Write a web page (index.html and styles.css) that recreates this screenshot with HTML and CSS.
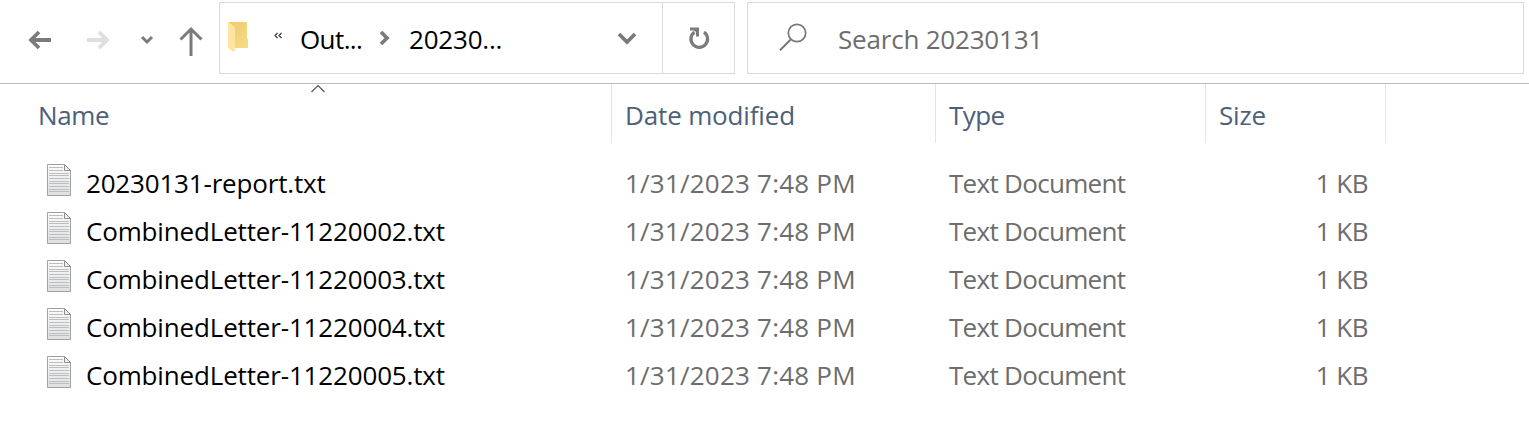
FILE: index.html
```html
<!DOCTYPE html>
<html lang="en">
<head>
<meta charset="utf-8">
<title>20230131</title>
<link rel="stylesheet" href="styles.css">
</head>
<body>
<svg class="defs" width="0" height="0" aria-hidden="true">
  <defs>
    <linearGradient id="paper" x1="0" y1="0" x2="0" y2="1"><stop offset="0" stop-color="#fcfcfc"/><stop offset="1" stop-color="#dde0e1"/></linearGradient>
    <linearGradient id="folder" x1="0" y1="0" x2="1" y2="1"><stop offset="0" stop-color="#ecca6c"/><stop offset="1" stop-color="#fadc86"/></linearGradient>
    <symbol id="doc" viewBox="0 0 26 34">
      <path d="M1.5 1.5H18.5L24.5 7.5V32.500H1.500Z" fill="url(#paper)" stroke="#9fa1a2"/>
      <path d="M3 4.500H17M3 7.500H17M3 10.500H23M3 12.500H23M3 15.500H23M3 18.500H23M3 20.500H23M3 23.500H23M3 26.500H23M3 28.500H23" stroke="#bcbebf"/>
      <path d="M18.500 1.500V7.500H24.500Z" fill="#eceeee" stroke="#8c8e8f"/>
    </symbol>
  </defs>
</svg>
<header class="toolbar">
  <nav class="nav">
    <svg width="220" height="83" fill="none" stroke="#7b7b7b">
      <path d="M51 40H31M39 32L31 40L39 48" stroke-width="3.800"/>
      <path d="M87 40H107M99 32L107 40L99 48" stroke="#dedede" stroke-width="3.800"/>
      <path d="M142 37L147 42L152 37" stroke-width="3"/>
      <path d="M191 56V29M180.500 39.500L191 29L201.500 39.500" stroke-width="3"/>
    </svg>
  </nav>
  <div class="address">
    <svg class="folder" width="24" height="34" viewBox="0 0 24 34">
      <path d="M1 1H20V17L21 18V27H6Z" fill="url(#folder)"/>
      <path d="M1 1L8 6V29L6.500 31L1 27Z" fill="#ffe59f"/>
    </svg>
    <svg class="more" width="10" height="8" fill="none" stroke="#333" stroke-width="1.200"><path d="M4.500 1L2 3.500L4.500 6M8.500 1L6 3.500L8.500 6"/></svg>
    <span class="crumb parent">Out...</span>
    <svg class="sep" width="12" height="16" fill="none" stroke="#7b7b7b" stroke-width="3.800"><path d="M2 2L8 8L2 14"/></svg>
    <span class="crumb current">20230...</span>
    <svg class="drop" width="20" height="14" fill="none" stroke="#7b7b7b" stroke-width="3.800"><path d="M2 3L10 11L18 3"/></svg>
    <div class="refresh">
      <svg width="22" height="24" viewBox="0 0 22 24"><path d="M6.500 6.200A8.300 8.300 0 1 0 16 6.200" fill="none" stroke="#7b7b7b" stroke-width="3.300"/><path d="M2 1.500H11V10.500H8V6L6 4.500H2Z" fill="#7b7b7b"/></svg>
    </div>
  </div>
  <div class="search">
    <svg width="30" height="32" fill="none" stroke="#777"><circle cx="19" cy="11" r="8.700" stroke-width="1.700"/><path d="M13 17.300L2 28.300" stroke-width="2"/></svg>
    <span class="hint">Search 20230131</span>
  </div>
</header>
<main class="files">
  <div class="head">
    <div class="col"><span class="h-name">Name</span><svg class="sort" width="16" height="9" fill="none" stroke="#555" stroke-width="1.200"><path d="M1.500 8L8 1.500L14.500 8"/></svg></div>
    <div class="col"><span class="h-date">Date modified</span></div>
    <div class="col"><span class="h-type">Type</span></div>
    <div class="col"><span class="h-size">Size</span></div>
  </div>
  <div class="row"><div class="name"><svg width="26" height="34"><use href="#doc"/></svg><span class="report">20230131-report.txt</span></div><span class="date">1/31/2023 7:48 PM</span><span class="type">Text Document</span><span class="size">1 KB</span></div>
  <div class="row"><div class="name"><svg width="26" height="34"><use href="#doc"/></svg><span class="letter">CombinedLetter-11220002.txt</span></div><span class="date">1/31/2023 7:48 PM</span><span class="type">Text Document</span><span class="size">1 KB</span></div>
  <div class="row"><div class="name"><svg width="26" height="34"><use href="#doc"/></svg><span class="letter">CombinedLetter-11220003.txt</span></div><span class="date">1/31/2023 7:48 PM</span><span class="type">Text Document</span><span class="size">1 KB</span></div>
  <div class="row"><div class="name"><svg width="26" height="34"><use href="#doc"/></svg><span class="letter">CombinedLetter-11220004.txt</span></div><span class="date">1/31/2023 7:48 PM</span><span class="type">Text Document</span><span class="size">1 KB</span></div>
  <div class="row"><div class="name"><svg width="26" height="34"><use href="#doc"/></svg><span class="letter">CombinedLetter-11220005.txt</span></div><span class="date">1/31/2023 7:48 PM</span><span class="type">Text Document</span><span class="size">1 KB</span></div>
</main>
</body>
</html>
```

FILE: styles.css
```css
* { box-sizing: border-box; }
body { margin: 0; height: 439px; overflow: hidden; background: #fff; color: #000; font: 26px/46px "Open Sans", "Noto Sans", sans-serif; white-space: nowrap; }
svg { display: block; flex: none; }
.defs { position: absolute; }
.toolbar { display: flex; height: 84px; border-bottom: 1px solid #bcbcbc; }
.nav { width: 219px; }
.address, .search { display: flex; align-items: center; height: 72px; margin-top: 2px; border: 1px solid #d9d9d9; }
.address { width: 516px; padding-left: 7px; }
.more { margin: 0 0 4px 22px; }
.crumb, .hint { padding-top: 2px; }
.parent { width: 62px; margin-left: 17px; letter-spacing: -.6px; }
.sep { margin-left: 17px; }
.current { width: 94px; margin-left: 18px; letter-spacing: -.2px; }
.drop { margin-left: 114px; }
.refresh { display: flex; align-items: center; justify-content: center; align-self: stretch; flex: 1; margin-left: 25px; border-left: 1px solid #d9d9d9; }
.search { width: 777px; margin-left: 12px; padding-left: 30px; color: #6d6d6d; }
.hint { margin-left: 30px; letter-spacing: -.2px; }
.head, .row { display: grid; grid-template-columns: 612px 324px 270px 180px; }
.head { height: 76px; color: #4c607a; }
.col { position: relative; height: 59px; padding: 8px 0 0 13px; border-right: 1px solid #e5e5e5; }
.col:first-child { padding-left: 38px; }
.h-name { letter-spacing: -.4px; }
.h-date { letter-spacing: -.15px; }
.h-type { letter-spacing: -.6px; }
.h-size { letter-spacing: -.2px; }
.sort { position: absolute; left: 310px; top: 0; }
.row { height: 48px; color: #6d6d6d; }
.row > span { padding-left: 13px; }
.name { display: flex; color: #000; padding-left: 46px; }
.name svg { margin-top: 3px; }
.name span { margin-left: 14px; }
.report { letter-spacing: -.18px; }
.letter { letter-spacing: -.16px; }
.date { letter-spacing: .22px; }
.type { letter-spacing: -.7px; }
.row .size { padding-right: 18px; text-align: right; letter-spacing: -.5px; }
```
